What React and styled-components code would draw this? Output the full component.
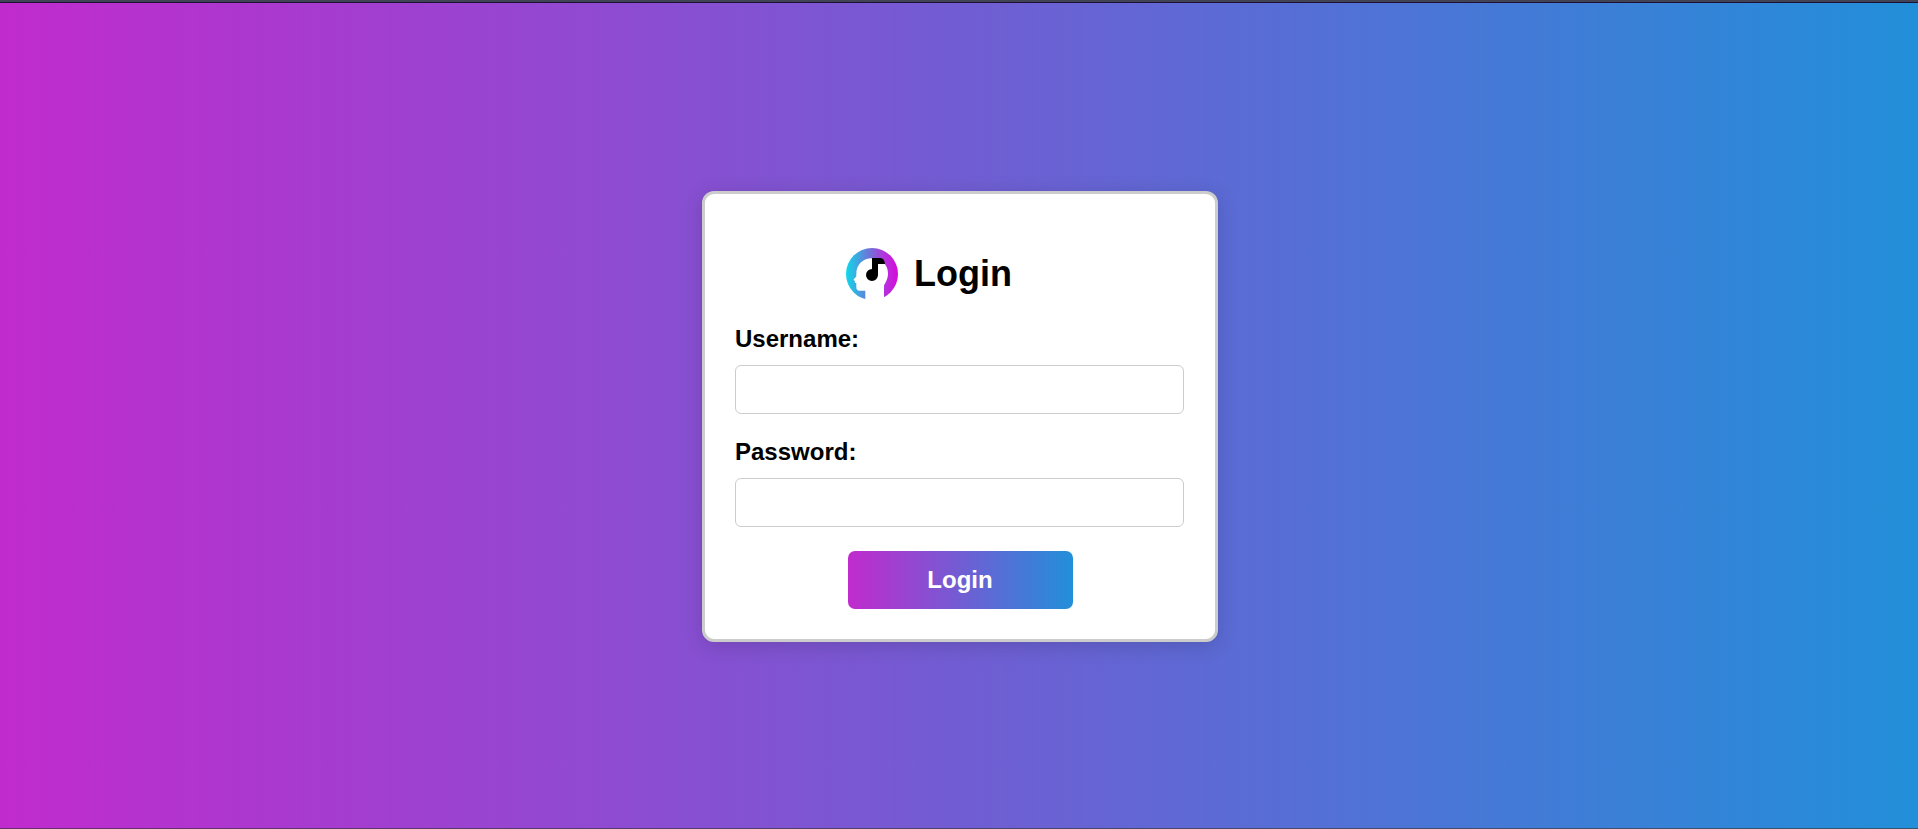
import React from "react";
import styled, { createGlobalStyle } from "styled-components";

const brandGradient = "linear-gradient(to right, #c12bcd, #228fd9)";

const GlobalStyle = createGlobalStyle`
  * { box-sizing: border-box; }
  body {
    margin: 0;
    font-family: Arial, "Liberation Sans", sans-serif;
    color: #000;
  }
`;

const Page = styled.div`
  display: flex;
  flex-direction: column;
  height: 100vh;
  background: ${brandGradient};
`;

const TopEdge = styled.div`
  height: 3px;
  background: #414456;
  border-bottom: 1px solid #1d1033;
`;

const BottomEdge = styled.div`
  height: 1px;
  background: linear-gradient(to right, #652f6b, #35566f);
`;

const Main = styled.main`
  flex: 1;
  display: flex;
  justify-content: center;
  align-items: flex-start;
  padding: 188px 0 0 2px;
`;

const Card = styled.form`
  display: flex;
  flex-direction: column;
  width: 516px;
  height: 451px;
  padding: 30px;
  background: #fff;
  border: 3px solid #ccc;
  border-radius: 12px;
  box-shadow: 0 4px 20px rgba(0, 0, 0, 0.15);
`;

const Header = styled.header`
  display: flex;
  align-items: center;
  height: 100px;
  margin-bottom: 1px;
  padding-left: 111px;
  gap: 16px;
`;

const Logo = styled.svg`
  display: block;
  width: 52px;
  height: 52px;
`;

const Title = styled.h1`
  margin: 0;
  font-size: 36px;
  line-height: 42px;
`;

const Label = styled.label`
  font-size: 24px;
  font-weight: bold;
  line-height: 28px;
  margin-bottom: 12px;
`;

const Input = styled.input`
  width: 449px;
  height: 49px;
  margin: 0 0 24px;
  padding: 12px;
  border: 1px solid #ccc;
  border-radius: 6px;
  background: #fff;
  font-size: 20px;
`;

const Submit = styled.button`
  align-self: center;
  width: 50%;
  height: 58px;
  padding: 0;
  border: 0;
  border-radius: 7px;
  background: ${brandGradient};
  color: #fff;
  font: bold 24px Arial, "Liberation Sans", sans-serif;
`;

function HeadLogo() {
  return (
    <Logo viewBox="0 0 52 52" aria-hidden="true">
      <defs>
        <linearGradient id="ring" x1="0" y1="0" x2="1" y2="0">
          <stop offset="0" stopColor="#10d8e8" />
          <stop offset="0.5" stopColor="#7a68d8" />
          <stop offset="0.72" stopColor="#b036de" />
          <stop offset="1" stopColor="#d80ad8" />
        </linearGradient>
      </defs>
      <circle cx="26" cy="26" r="26" fill="url(#ring)" />
      <path
        fill="#fff"
        d="M19.3 53V42.7H13.5Q10.3 42.5 10.3 39.5V35H9.2Q8.5 34.5 9 33L7.5 32Q7.5 31.3 10.3 28.5V26C10.3 16.5 17 10.3 26 10.3C36 10.3 42 17 42 25.5C42 31 39.5 34.5 38 37.5V53Z"
      />
      <path
        fill="#000"
        d="M26 10H34.5Q38.5 10.5 39 16H32V27A6 6 0 1 1 26 21Z"
      />
    </Logo>
  );
}

export default function App() {
  return (
    <>
      <GlobalStyle />
      <Page>
        <TopEdge />
        <Main>
          <Card onSubmit={(event) => event.preventDefault()}>
            <Header>
              <HeadLogo />
              <Title>Login</Title>
            </Header>
            <Label htmlFor="username">Username:</Label>
            <Input id="username" type="text" />
            <Label htmlFor="password">Password:</Label>
            <Input id="password" type="password" />
            <Submit type="submit">Login</Submit>
          </Card>
        </Main>
        <BottomEdge />
      </Page>
    </>
  );
}
